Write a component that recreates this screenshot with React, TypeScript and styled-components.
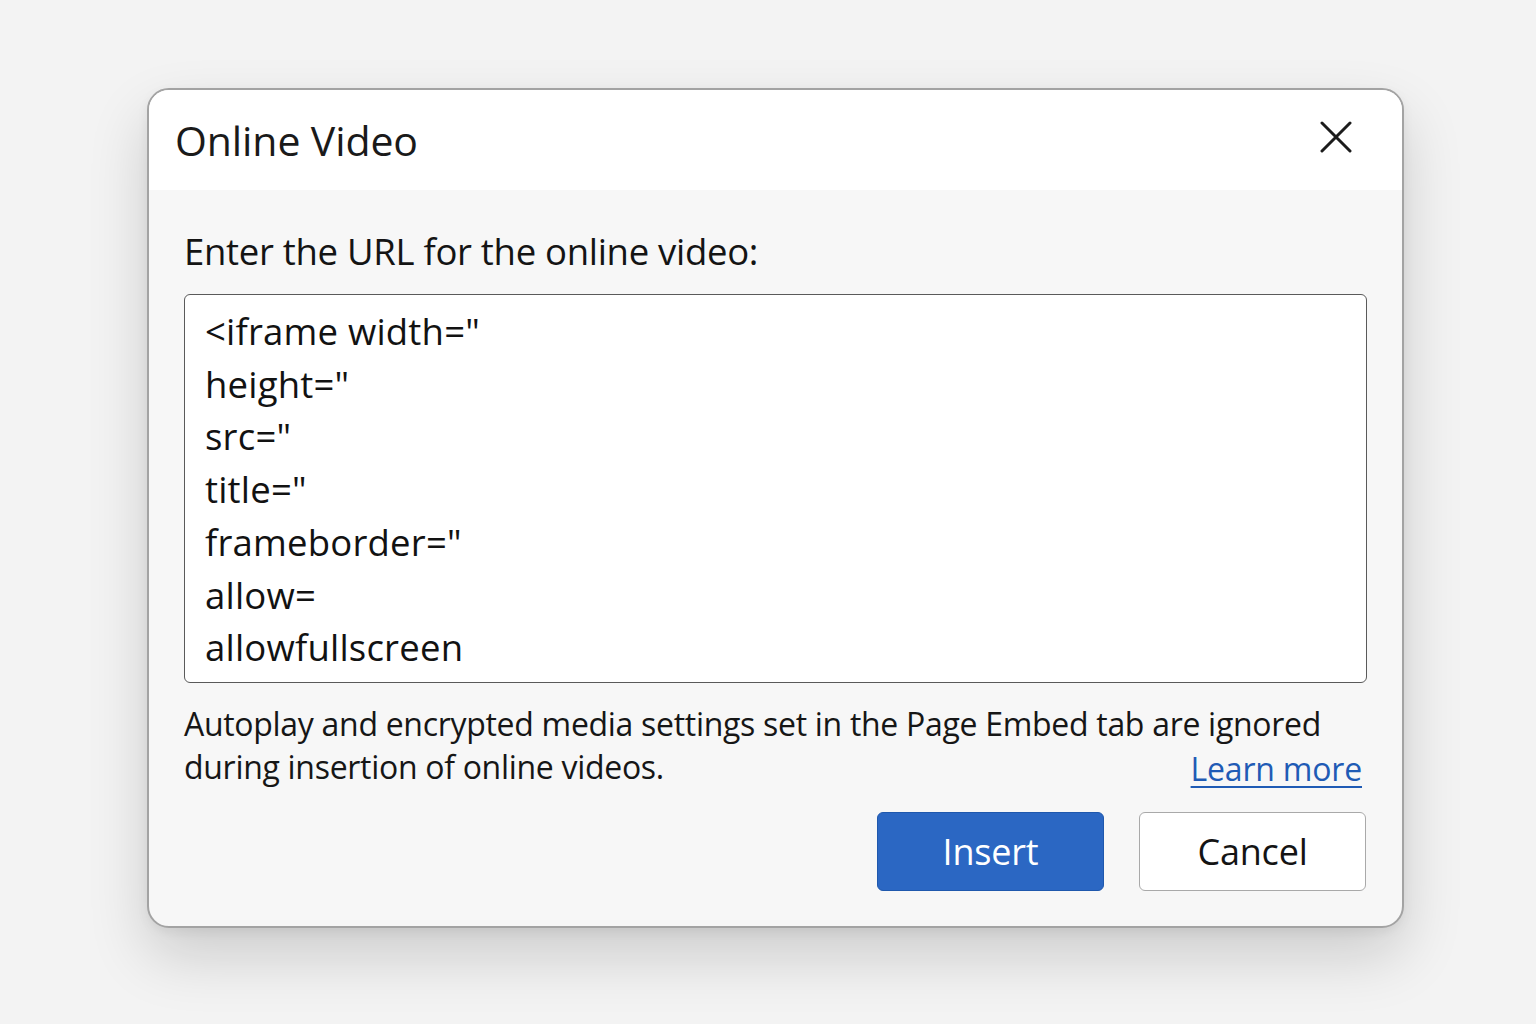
import { createGlobalStyle } from 'styled-components';
import styled from 'styled-components';

const GlobalStyle = createGlobalStyle`
  html, body {
    margin: 0;
    padding: 0;
    background: #f3f3f3;
    font-family: 'Open Sans', 'Noto Sans', 'Liberation Sans', sans-serif;
    color: #151515;
  }
`;

const embedLines = [
  '<iframe width="',
  'height="',
  'src="',
  'title="',
  'frameborder="',
  'allow=',
  'allowfullscreen',
];

const App = () => {
  return (
    <>
      <GlobalStyle />
      <Page>
        <Dialog>
          <Header>
            <Title>Online Video</Title>
            <CloseButton aria-label="Close">
              <svg width="32" height="32" viewBox="0 0 32 32" fill="none">
                <path d="M2 2 L30 30 M30 2 L2 30" stroke="#1c1c1c" strokeWidth="3" strokeLinecap="round" />
              </svg>
            </CloseButton>
          </Header>
          <Body>
            <Label>Enter the URL for the online video:</Label>
            <CodeBox>
              {embedLines.map((line) => (
                <CodeLine key={line}>{line}</CodeLine>
              ))}
            </CodeBox>
            <Note>
              <NoteLine>Autoplay and encrypted media settings set in the Page Embed tab are ignored</NoteLine>
              <NoteRow>
                <NoteLine>during insertion of online videos.</NoteLine>
                <LearnMore href="#">Learn more</LearnMore>
              </NoteRow>
            </Note>
            <Actions>
              <Button $primary>Insert</Button>
              <Button>Cancel</Button>
            </Actions>
          </Body>
        </Dialog>
      </Page>
    </>
  );
};

const Page = styled.div`
  width: 1536px;
  height: 1024px;
  padding: 88px 0 0 147px;
  box-sizing: border-box;
  display: flex;
  align-items: flex-start;
`;

const Dialog = styled.div`
  width: 1257px;
  height: 840px;
  box-sizing: border-box;
  border: 2px solid #a3a3a3;
  border-radius: 22px;
  background: #f7f7f7;
  overflow: hidden;
  display: flex;
  flex-direction: column;
  box-shadow: 0 28px 60px rgba(0, 0, 0, 0.16), 0 4px 12px rgba(0, 0, 0, 0.06);
`;

const Header = styled.div`
  height: 100px;
  flex-shrink: 0;
  background: #ffffff;
  display: flex;
  align-items: center;
  justify-content: space-between;
  padding: 0 48px 0 26px;
`;

const Title = styled.h1`
  margin: 0;
  font-size: 41px;
  font-weight: 400;
  line-height: 54px;
  letter-spacing: -0.1px;
  color: #1a1a1a;
`;

const CloseButton = styled.button`
  width: 36px;
  height: 36px;
  padding: 0;
  margin-top: -6px;
  border: none;
  background: transparent;
  display: flex;
  align-items: center;
  justify-content: center;
`;

const Body = styled.div`
  flex: 1;
  display: flex;
  flex-direction: column;
  padding: 37px 35px 0 35px;
`;

const Label = styled.div`
  font-size: 36.5px;
  line-height: 48px;
  letter-spacing: -0.3px;
  color: #141414;
`;

const CodeBox = styled.div`
  margin-top: 19px;
  height: 389px;
  box-sizing: border-box;
  background: #ffffff;
  border: 1px solid #5a5a5a;
  border-radius: 6px;
  padding: 10px 20px 0 20px;
`;

const CodeLine = styled.div`
  font-size: 36.5px;
  line-height: 52.7px;
  letter-spacing: 0.2px;
  color: #121212;
  white-space: pre;
`;

const Note = styled.div`
  margin-top: 19px;
  display: flex;
  flex-direction: column;
`;

const NoteRow = styled.div`
  display: flex;
  justify-content: space-between;
  align-items: baseline;
  padding-right: 5px;
`;

const NoteLine = styled.div`
  font-size: 32px;
  line-height: 43px;
  letter-spacing: -0.3px;
  color: #161616;
`;

const LearnMore = styled.a`
  font-size: 32px;
  line-height: 43px;
  letter-spacing: -0.2px;
  color: #1f5bb5;
  text-decoration: underline;
  text-underline-offset: 5px;
  text-decoration-thickness: 2px;
  position: relative;
  top: 2px;
`;

const Actions = styled.div`
  margin-top: 24px;
  display: flex;
  justify-content: flex-end;
  gap: 35px;
  padding-right: 1px;
`;

const Button = styled.button<{ $primary?: boolean }>`
  width: 227px;
  height: 79px;
  border-radius: 6px;
  font-family: inherit;
  font-size: 36px;
  letter-spacing: -0.2px;
  cursor: pointer;
  background: ${({ $primary }) => ($primary ? '#2b67c3' : '#ffffff')};
  color: ${({ $primary }) => ($primary ? '#ffffff' : '#141414')};
  border: 1px solid ${({ $primary }) => ($primary ? '#1f58ad' : '#a9a9a9')};
`;

export default App;
